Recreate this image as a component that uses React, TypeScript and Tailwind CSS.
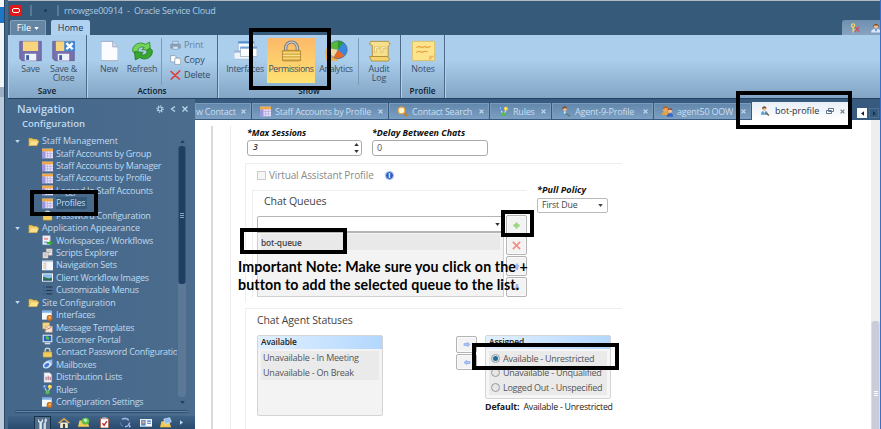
import React from "react";

type IconProps = { name: string; className?: string };

const shapes: Record<string, React.ReactNode> = {
  folder: (
    <>
      <path d="M1 14V3h5l2 2h6v3" fill="#d8a92c" />
      <path d="M1 14L4 7h12l-3 7z" fill="#fce08a" stroke="#c79a2c" strokeWidth=".6" />
      <path d="M2 5h11v2H4l-2 5z" fill="#f6d774" />
    </>
  ),
  report: (
    <>
      <path d="M0 1h16v14H0z" fill="#e8e4fb" />
      <path d="M0 1h16v4H0z" fill="#f0a848" />
      <path d="M0 5h5v10H0z" fill="#7f78d0" opacity=".75" />
      <path d="M8 5v10M12 5v10M0 8h16M0 11.500h16" stroke="#a8a0e0" strokeWidth=".9" />
    </>
  ),
  lock: (
    <>
      <path d="M4.500 8V5a3.500 3.500 0 017 0v3" fill="none" stroke="#d8d8c8" strokeWidth="1.800" />
      <rect x="1.500" y="7" width="13" height="8" rx="1" fill="#ecc24c" stroke="#b88a20" strokeWidth=".6" />
      <path d="M2 10h12M2 12.500h12" stroke="#fbe49a" strokeWidth=".8" />
    </>
  ),
  workspace: (
    <>
      <path d="M1 1h11v13H1z" fill="#f3f5fb" stroke="#b8c0d8" strokeWidth=".6" />
      <path d="M3 4h6v3H3z" fill="#e89aa0" />
      <path d="M3 9h5v3H3z" fill="#9ab0e0" />
      <path d="M7 10h4V7.500l5 4-5 4V13H7z" fill="#2eb030" />
    </>
  ),
  scripts: (
    <>
      <path d="M6 1h9v10H6z" fill="#eceae8" stroke="#777" strokeWidth=".7" />
      <path d="M1 6h8v9H1z" fill="#e9e5e3" stroke="#777" strokeWidth=".7" />
      <path d="M8 4h5M8 6.500h5M3 9h4M3 11.500h4" stroke="#999" strokeWidth=".9" />
    </>
  ),
  navset: (
    <>
      <path d="M0 1h16v14H0z" fill="#f4f7fc" />
      <path d="M0 1h16v2H0z" fill="#c5d0e6" />
      <path d="M5.500 3v12" stroke="#a9b7d6" />
      <path d="M1.500 5.500h3M1.500 8.500h3M1.500 11.500h3" stroke="#e8a860" strokeWidth="1.200" />
    </>
  ),
  image: (
    <>
      <path d="M0 2h16v12H0z" fill="#f0f4fa" />
      <path d="M1.500 3.500h13v5h-13z" fill="#86b8ee" />
      <path d="M1.500 7l4 1 4 1 5-1v4.500h-13z" fill="#2f7a45" />
      <path d="M1.500 11h13v1.500h-13z" fill="#264f8c" />
    </>
  ),
  menu: (
    <>
      <path d="M1 3h3M1 8h3M1 13h3" stroke="#2b57a0" strokeWidth="1.600" />
      <path d="M6 3h9M6 8h9M6 13h9" stroke="#1d2c40" strokeWidth="1.300" />
    </>
  ),
  config: (
    <>
      <path d="M0 1h14v13H0z" fill="#f5f8fd" />
      <path d="M0 1h14v3H0z" fill="#7eb2ea" />
      <circle cx="11" cy="11.500" r="3.500" fill="#e58a2e" stroke="#c2651a" strokeWidth="1.500" />
      <circle cx="11.500" cy="10.500" r="1.400" fill="#ffc070" />
    </>
  ),
  template: (
    <>
      <path d="M1 1h10v9H1z" fill="#f4d88c" stroke="#c69a44" strokeWidth=".7" />
      <path d="M5 6h10v9H5z" fill="#f8e9dc" stroke="#c9906a" strokeWidth=".7" />
      <path d="M3 13L13 8M5 6l5 4 5-4" stroke="#c08058" fill="none" />
    </>
  ),
  portal: (
    <>
      <path d="M1 1h14v11H1z" fill="#e9edf4" />
      <path d="M2.500 2.500h11v8h-11z" fill="#2a5fb4" />
      <path d="M5 4l3-1 3 3-2 3-3-2z" fill="#52c045" />
      <path d="M4 12.500h8V15H4z" fill="#d7dde8" />
    </>
  ),
  mailbox: (
    <>
      <ellipse cx="8" cy="8" rx="7.500" ry="5" fill="#cfe3ff" transform="rotate(-35 8 8)" />
      <ellipse cx="7" cy="9" rx="4" ry="2.500" fill="#3f78d4" transform="rotate(-35 7 9)" />
      <path d="M9 2l6-1.500V8z" fill="#8cb8f4" />
    </>
  ),
  list: (
    <>
      <path d="M3 1h8l3 3v11H3z" fill="#f2f2f6" stroke="#c0c0cc" strokeWidth=".6" />
      <path d="M6 7v5M9 5.500V12M12 7v5" stroke="#b04858" strokeWidth="1.200" />
      <path d="M5 9h7" stroke="#8a94c4" strokeWidth=".8" />
    </>
  ),
  rules: (
    <>
      <path d="M4 5l4 8 4-8" stroke="#d9e4f0" strokeWidth="1.500" fill="none" />
      <circle cx="4" cy="4" r="3" fill="#4f86e4" />
      <circle cx="11.500" cy="4" r="3" fill="#f2d44a" />
      <circle cx="8" cy="12" r="3" fill="#4fbf56" />
      <circle cx="3.500" cy="3.200" r="1" fill="#d5e5ff" />
      <circle cx="11" cy="3.200" r="1" fill="#fffbe0" />
    </>
  ),
  search: (
    <>
      <path d="M9.500 9.500l5 5" stroke="#d07a20" strokeWidth="3" />
      <circle cx="6.500" cy="6.500" r="4.800" fill="#fff4d8" stroke="#f0a53c" strokeWidth="1.600" />
    </>
  ),
  person: (
    <>
      <path d="M1.500 14c0-5 2-6 5.500-6s5.500 1 5.500 6z" fill="#5f9fd4" />
      <path d="M5.500 8h3L7 12z" fill="#f4f8fc" />
      <circle cx="7" cy="4.500" r="3" fill="#f0b888" />
      <path d="M3.500 5c-1-6 7-6 7-1L7 3z" fill="#7a5230" />
      <path d="M9 11l5.500 4" stroke="#7a6a50" strokeWidth="2" />
    </>
  ),
  people: (
    <>
      <circle cx="5" cy="5" r="3.800" fill="#f0a860" />
      <path d="M1 5c0-6 8-6 8-1L5 3z" fill="#b8621c" />
      <path d="M0 13c0-4 2-5 5-5s5 1 5 5z" fill="#e9a13c" />
      <circle cx="11.500" cy="7" r="3.300" fill="#f2c08c" />
      <path d="M8 7c0-5 7-5 7-1l-4-1z" fill="#8a3a14" />
      <path d="M7 15.500c0-4 2-5 4.500-5S16 11 16 15.500z" fill="#3d63c4" />
    </>
  ),
  agent: (
    <>
      <path d="M0 15c0-4 3-6 8-6s8 2 8 6z" fill="#dbe8fb" />
      <path d="M6 10l2 4 2-4z" fill="#4d7ccc" />
      <circle cx="8" cy="5.500" r="3.400" fill="#f1bd8c" />
      <path d="M3.500 7C2 0 14 0 12.500 7L11 4H5z" fill="#7c4420" />
    </>
  ),
  keyx: (
    <>
      <circle cx="5" cy="4" r="2.600" fill="none" stroke="#f2d060" strokeWidth="2" />
      <path d="M5 6v9M5 11h3" stroke="#f2d060" strokeWidth="2.200" />
      <path d="M8 6l7 8M15 6l-7 8" stroke="#e03c48" strokeWidth="1.700" />
    </>
  ),
  floppy: (
    <>
      <path d="M.5 1h15v14H2L.5 13.500z" fill="#7670ac" stroke="#5c5690" strokeWidth=".5" />
      <path d="M2.700 1h10.600v7H2.700z" fill="#f8d47c" />
      <path d="M4 10h8v5H4z" fill="#eef3fb" />
      <path d="M5 11h2v3.500H5z" fill="#3d5fa8" />
    </>
  ),
  floppyx: (
    <>
      <path d="M.5 1h15v14H2L.5 13.500z" fill="#7670ac" stroke="#5c5690" strokeWidth=".5" />
      <path d="M2.700 1h10.600v7H2.700z" fill="#f8d47c" />
      <path d="M4 10h8v5H4z" fill="#eef3fb" />
      <path d="M5 11h2v3.500H5z" fill="#3d5fa8" />
      <path d="M8.500 1H16v7H8.500z" fill="#3f86d4" />
      <path d="M10 2.300l4.400 4.400M14.400 2.300L10 6.700" stroke="#fff" strokeWidth="1.700" />
    </>
  ),
  page: (
    <>
      <path d="M0 1h11l5 4v10H0z" fill="#fbfcff" stroke="#8e9bb4" strokeWidth=".6" />
      <path d="M11 1v4h5" fill="#cfd9ea" stroke="#8e9bb4" strokeWidth=".6" />
    </>
  ),
  refresh: (
    <>
      <path d="M1.200 8.500C.5 3.500 6 .5 10 3.200L13 1.500l.5 6-6-.5L9.300 5.500C6.500 4.300 4.600 6 5 8.500L3 10z" fill="#74d45a" stroke="#2c8a24" strokeWidth=".6" />
      <path d="M14.800 7.500c.7 5-4.800 8-8.800 5.300L3 14.500l-.5-6 6 .5-1.800 1.500c2.800 1.200 4.700-.5 4.300-3L13 6z" fill="#39a62e" stroke="#1f7a1c" strokeWidth=".6" />
    </>
  ),
  printer: (
    <>
      <path d="M4 2h8v5H4z" fill="#c5d6e8" stroke="#6f88a2" strokeWidth=".8" />
      <path d="M1 7h14v6H1z" fill="#8ea6be" stroke="#66809c" strokeWidth=".8" />
      <path d="M4 10h8v5H4z" fill="#d4e2ef" stroke="#6f88a2" strokeWidth=".8" />
    </>
  ),
  copy: (
    <>
      <path d="M1 1h6l2 2v8H1z" fill="#fff" stroke="#68788c" strokeWidth=".8" />
      <path d="M7 5h6l2.500 2.500V15H7z" fill="#fff" stroke="#68788c" strokeWidth=".8" />
    </>
  ),
  redx: <path d="M1.500 2.500l12 12M14 1.500L2 14.500" stroke="#e63c32" strokeWidth="2.500" strokeLinecap="round" />,
  windows: (
    <>
      <path d="M3 1h11v7H3z" fill="#f4f8fd" stroke="#8fa6c4" strokeWidth=".4" />
      <path d="M3 1h11v1.500H3z" fill="#4a8bd4" />
      <path d="M0 8h11v6H0z" fill="#eef4fb" stroke="#8fa6c4" strokeWidth=".4" />
      <path d="M0 8h11v1.200H0z" fill="#9ab8da" />
      <path d="M4.500 5H16v7H4.500z" fill="#fbfdff" stroke="#8094b0" strokeWidth=".4" />
      <path d="M4.500 5H16v1.300H4.500z" fill="#6a9fdc" />
    </>
  ),
  padlock: (
    <>
      <path d="M4 8V5.500a4 4 0 018 0V8" fill="none" stroke="#6e7178" strokeWidth="2.200" />
      <path d="M4 8V5.500a4 4 0 018 0V8" fill="none" stroke="#c4c8ce" strokeWidth="1.100" />
      <rect x="1.700" y="7.500" width="12.600" height="7.700" rx=".6" fill="#deb348" stroke="#9a762a" strokeWidth=".5" />
      <path d="M2 9.300h12M2 11.300h12M2 13.300h12" stroke="#f9e094" strokeWidth=".8" />
    </>
  ),
  pie: (
    <>
      <path d="M0 8l3-5h6v12H1z" fill="#f3b13c" />
      <circle cx="9" cy="7" r="6.500" fill="#3a86e0" />
      <path d="M9 7V.5A6.500 6.500 0 002.600 6z" fill="#58b83c" />
      <path d="M9 7L2.600 6A6.500 6.500 0 006 12.800z" fill="#f0d9a4" />
      <path d="M9 7l-3 5.800a6.500 6.500 0 007.500-1.300z" fill="#e86a28" />
      <path d="M9 7V.5a6.500 6.500 0 014 1.400z" fill="#2c9a38" />
      <circle cx="9" cy="7" r="6.500" fill="none" stroke="#50708a" strokeWidth=".5" />
    </>
  ),
  scroll: (
    <>
      <path d="M2 1h12l1.500 2-1.500 1.500V12H3V4L1 3z" fill="#f7e08c" stroke="#b08a30" strokeWidth=".6" />
      <path d="M1 12h12l2 1.500-1 1.800H2.500z" fill="#f3d470" stroke="#b08a30" strokeWidth=".6" />
      <path d="M4.500 5h3.500v1.300H5.800V9H4.500zM9 5h3.500v1.300h-2.200V9H9z" fill="#fff6c8" stroke="#b89238" strokeWidth=".3" />
    </>
  ),
  note: (
    <>
      <path d="M.3 1h15.400v14H.3z" fill="#fbe48c" stroke="#dcb850" strokeWidth=".5" />
      <path d="M3 5.500l2-.8 2 .8 2-.8 2 .8 2-1M3 9l2-.8 2 .8 2-.8 2 .3" stroke="#e8a040" strokeWidth=".8" fill="none" />
      <path d="M12 15v-3.500h3.500z" fill="#f0b860" />
    </>
  ),
  tools: (
    <>
      <path d="M3 1v3l2 1.500L7 4V1c3 1.500 2 5 0 6v9H3.500V7C1 6 .5 2.500 3 1z" fill="#e2e9f1" />
      <path d="M13 0l2 3-2 4v9h-3.500V8L11 6V2z" fill="#c9d6e4" />
    </>
  ),
  home: (
    <>
      <path d="M3 8h10v8H3z" fill="#f8eed0" />
      <path d="M0 8.500L8 1l8 7.500-1.500 1L8 4 1.500 9.500z" fill="#e8a848" />
      <path d="M6.500 10h3v6h-3z" fill="#4a4440" />
    </>
  ),
  globe: (
    <>
      <path d="M0 14l2-9h10l3 9z" fill="#f2cc58" />
      <circle cx="10" cy="6" r="5" fill="#5dbb48" />
      <path d="M7 4l3-2 3 3-3 3z" fill="#c6efc0" />
    </>
  ),
  clip: (
    <>
      <path d="M2 2h12v14H2z" fill="#fff" stroke="#a85032" strokeWidth="1.200" />
      <path d="M5 .5h6v3H5z" fill="#b4bac6" />
      <path d="M5 9l2.500 3L11.500 6" stroke="#c02c34" strokeWidth="2" fill="none" />
    </>
  ),
  ring: (
    <>
      <path d="M4 3.500a6 6 0 019 1.500M14 8a6 6 0 01-6 6" fill="none" stroke="#a5b5ec" strokeWidth="2.200" />
      <path d="M2 8a6 6 0 003.500 5.500" fill="none" stroke="#5570b0" strokeWidth="2" />
      <path d="M13 12l3 1-2 3z" fill="#c6d2f4" />
    </>
  ),
  card: (
    <>
      <path d="M0 3h16v11H0z" fill="#f5f8fd" />
      <path d="M1.500 4.500h6v8h-6z" fill="#4d8ad0" />
      <circle cx="4.500" cy="7.500" r="1.800" fill="#f2a47a" />
      <path d="M9.500 6h5M9.500 9h5" stroke="#3f77c4" strokeWidth="1.500" />
    </>
  ),
  docs: (
    <>
      <path d="M0 15l2-9h10l3 9z" fill="#f0c850" />
      <path d="M5 3l8-2 2 6-8 4z" fill="#8fbdf0" stroke="#e8f2ff" strokeWidth=".8" />
    </>
  ),
};

const Icon = ({ name, className = "size-[11px]" }: IconProps) => (
  <svg viewBox="0 0 16 16" preserveAspectRatio="none" className={`shrink-0 ${className}`}>
    {shapes[name]}
  </svg>
);

const tree: [string, string][] = [
  ["folder", "Staff Management"],
  ["report", "Staff Accounts by Group"],
  ["report", "Staff Accounts by Manager"],
  ["report", "Staff Accounts by Profile"],
  ["report", "Logged In Staff Accounts"],
  ["report", "Profiles"],
  ["lock", "Password Configuration"],
  ["folder", "Application Appearance"],
  ["workspace", "Workspaces / Workflows"],
  ["scripts", "Scripts Explorer"],
  ["navset", "Navigation Sets"],
  ["image", "Client Workflow Images"],
  ["menu", "Customizable Menus"],
  ["folder", "Site Configuration"],
  ["config", "Interfaces"],
  ["template", "Message Templates"],
  ["portal", "Customer Portal"],
  ["lock", "Contact Password Configuratio"],
  ["mailbox", "Mailboxes"],
  ["list", "Distribution Lists"],
  ["rules", "Rules"],
  ["config", "Configuration Settings"],
];

const Cross = ({ className = "text-[#c4d9ec]" }: { className?: string }) => (
  <svg viewBox="0 0 6 6" className={`size-[5px] shrink-0 ${className}`}>
    <path d="M.7.700l4.600 4.600M5.300.700L.7 5.300" stroke="currentColor" strokeWidth="1.500" />
  </svg>
);

const BigButton = ({ icon, label, className }: { icon: string; label: React.ReactNode; className: string }) => (
  <div className={`flex h-[45px] shrink-0 flex-col items-center pt-[2px] ${className}`}>
    <Icon name={icon} className={icon === "page" ? "h-[22px] w-[17px]" : "h-[22px] w-[23px]"} />
    <div className="mt-[2px] text-center text-[8.9px] leading-[9px] tracking-[-0.15px] whitespace-nowrap text-[#3c4f63]">{label}</div>
  </div>
);

const Group = ({ title, className, children }: { title: string; className: string; children: React.ReactNode }) => (
  <div className={`flex shrink-0 flex-col border-r border-[#4d6987] shadow-[inset_1px_0_0_#b4d0ea] ${className}`}>
    <div className="flex h-[48px] pt-[3px]">{children}</div>
    <div className="mt-[2px] text-center text-[8.2px] leading-[11px] font-semibold text-[#0b1a2c]">{title}</div>
  </div>
);

const SmallAction = ({ icon, label, className }: { icon: string; label: string; className: string }) => (
  <div className={`flex h-[15px] items-center gap-[3px] text-[9px] tracking-[-0.15px] ${className}`}>
    <Icon name={icon} className="h-[10px] w-[11px]" />
    {label}
  </div>
);

const Tab = ({ icon, label, className }: { icon?: string; label: string; className: string }) => (
  <div className={`mr-[1px] flex h-[16px] shrink-0 items-center border-x border-t border-[#7c9cbc] bg-gradient-to-b from-[#6388ab] to-[#7c9fc2] pr-[4px] text-[9px] tracking-[-0.22px] whitespace-nowrap text-[#c9def1] ${className}`}>
    {icon && <Icon name={icon} className="mr-[4px] h-[11px] w-[11px]" />}
    <span className="flex-1">{label}</span>
    <Cross />
  </div>
);

const ArrowDown = ({ className = "" }: { className?: string }) => (
  <svg viewBox="0 0 6 4" className={`h-[3px] w-[5px] shrink-0 ${className}`}>
    <path d="M0 0h6L3 4z" fill="currentColor" />
  </svg>
);

const SquareButton = ({ className = "h-[20px] w-[21px]", children }: { className?: string; children: React.ReactNode }) => (
  <div className={`flex shrink-0 items-center justify-center rounded-[2px] border border-[#b4b4b4] bg-[#f3f3f3] shadow-[inset_0_0_0_1px_#fafafa] ${className}`}>
    {children}
  </div>
);

const BlueArrow = ({ className = "" }: { className?: string }) => (
  <svg viewBox="0 0 8 6" className={`h-[5px] w-[8px] ${className}`}>
    <path d="M.3 1.800h4V.3L7.700 3 4.300 5.700V4.200h-4z" fill="#a5c1f8" stroke="#6a92e4" strokeWidth=".5" />
  </svg>
);

const Radio = ({ on, label }: { on?: boolean; label: string }) => (
  <div className="flex h-[14.5px] items-center gap-[3px] pl-[2px]">
    <span className="flex size-[9px] shrink-0 items-center justify-center rounded-full border border-[#9a9a9a] bg-[#e6e6e6]">
      {on && <span className="size-[5px] rounded-full bg-[#1f6f9e]" />}
    </span>
    {label}
  </div>
);

const Mark = ({ className }: { className: string }) => <div className={`absolute border-black ${className}`} />;

export default function App() {
  return (
    <div className="relative flex h-[429px] w-[881px] overflow-hidden bg-[#3f5f7f] font-['Open_Sans','Noto_Sans',sans-serif]">
      <div className="flex w-[4px] shrink-0 flex-col bg-[#bccbdc]">
        <div className="h-[7px] bg-[#f4f4f4]" />
        <div className="h-[16px] bg-[#1d75c8]" />
        <div className="h-[64px] bg-[#f2f5f8]" />
        <div className="h-[10px] bg-[#9db0c4]" />
      </div>
      <div className="w-[4px] shrink-0 border-l border-[#2b4864] bg-[#446688]" />

      <div className="flex w-[872px] shrink-0 flex-col">
        <div className="flex h-[35px] shrink-0 flex-col border-t border-[#b2b8bd] bg-[#365a79]">
          <div className="flex h-[19px] items-center">
            <div className="ml-[2px] flex h-[11px] w-[12px] items-center justify-center rounded-[2px] bg-[#e01818]">
              <div className="h-[5px] w-[8px] rounded-[2px] border border-white" />
            </div>
            <div className="ml-[8px] h-[11px] w-[2px] bg-[#587a98]" />
            <div className="ml-[12px] size-[3px] rounded-full bg-[#1d3a54]" />
            <div className="ml-[10px] h-[11px] w-[2px] bg-[#587a98]" />
            <div className="ml-[5px] text-[9px] tracking-[-0.23px] whitespace-pre text-[#a9cbe8]">rnowgse00914  -  Oracle Service Cloud</div>
          </div>
          <div className="flex h-[15px] text-[9.2px]">
            <div className="ml-[2px] flex w-[36px] items-center justify-center gap-[3px] rounded-t-[2px] border-x border-t border-[#86a2bb] bg-[#6485a3] text-white">
              File <ArrowDown />
            </div>
            <div className="ml-[5px] flex w-[39px] items-center justify-center rounded-t-[2px] bg-[#b0d1f0] text-[9px] text-[#12365c]">Home</div>
            <div className="ml-[752px] flex h-[15px] w-[38px] items-center gap-[11px] rounded-tl-[3px] bg-gradient-to-b from-[#6f8faf] to-[#87a4c1] pl-[8px]">
              <Icon name="keyx" className="size-[10px]" />
              <Icon name="agent" className="size-[10px]" />
            </div>
          </div>
        </div>

        <div className="flex h-[63px] shrink-0 bg-gradient-to-b from-[#abceed] from-40% to-[#83a5c5]">
          <Group title="Save" className="w-[79px]">
            <BigButton icon="floppy" label="Save" className="ml-[6px] w-[33px]" />
            <BigButton icon="floppyx" label={<>Save &<br />Close</>} className="w-[33px]" />
          </Group>
          <Group title="Actions" className="w-[131px]">
            <BigButton icon="page" label="New" className="ml-[4px] w-[36px]" />
            <BigButton icon="refresh" label="Refresh" className="w-[30px]" />
            <div className="ml-[4px] h-[47px] w-px bg-[#7f9ab5]" />
            <div className="ml-[8px] -mt-px">
              <SmallAction icon="printer" label="Print" className="text-[#6683a0]" />
              <SmallAction icon="copy" label="Copy" className="text-[#334a62]" />
              <SmallAction icon="redx" label="Delete" className="text-[#334a62]" />
            </div>
          </Group>
          <Group title="Show" className="w-[183px]">
            <BigButton icon="windows" label={<span className="tracking-[-0.35px]">Interfaces</span>} className="ml-[6px] w-[42px]" />
            <BigButton icon="padlock" label={<span className="tracking-[-0.45px]">Permissions</span>} className="ml-[1px] w-[48px] bg-gradient-to-b from-[#fcb968] to-[#fde272]" />
            <BigButton icon="pie" label={<span className="tracking-[-0.35px]">Analytics</span>} className="ml-[1px] w-[40px]" />
            <div className="ml-[2px] h-[47px] w-px bg-[#7f9ab5]" />
            <BigButton icon="scroll" label={<>Audit<br />Log</>} className="ml-[1px] w-[38px]" />
          </Group>
          <Group title="Profile" className="w-[44px]">
            <BigButton icon="note" label="Notes" className="w-[44px]" />
          </Group>
          <div className="w-px bg-[#b4d0ea]" />
        </div>
        <div className="h-px shrink-0 bg-[#25415f]" />

        <div className="flex h-[330px]">
          <div className="flex w-[187px] shrink-0 flex-col bg-gradient-to-r from-[#45678a] to-[#4b6c8d] text-[#bfdaf1]">
            <div className="flex h-[20px] items-center pr-[7px] pl-[9px]">
              <div className="flex-1 text-[11px] font-semibold">Navigation</div>
              <svg viewBox="0 0 32 8" className="h-[8px] w-[32px]">
                <circle cx="4" cy="4" r="2" fill="none" stroke="currentColor" strokeWidth="1.200" />
                <circle cx="4" cy="4" r="3.200" fill="none" stroke="currentColor" strokeWidth="1.200" strokeDasharray="1.100 1.400" />
                <path d="M19 1.500L15.500 4 19 6.500M26.500 1.500l5 5M31.500 1.500l-5 5" fill="none" stroke="currentColor" strokeWidth="1.300" />
              </svg>
            </div>
            <div className="h-[15px] pl-[14px] text-[9.5px] leading-[9px] font-semibold">Configuration</div>
            <div className="flex h-[275px]">
              <div className="w-[169px] overflow-hidden pt-[1px] text-[9px] tracking-[-0.26px]">
                {tree.map(([icon, label]) => (
                  <div key={label} className={`flex h-[12.43px] items-center whitespace-nowrap ${icon === "folder" ? "pl-[7px] tracking-[-0.08px]" : "pl-[34px]"}`}>
                    {icon === "folder" && <ArrowDown className="mr-[8px]" />}
                    <Icon name={icon} className="h-[11px] w-[11px]" />
                    <span className={`ml-[3px] leading-[12px] ${label === "Profiles" ? "bg-[#345878] pr-[2px]" : ""}`}>{label}</span>
                  </div>
                ))}
              </div>
              <div className="ml-[1px] flex w-[8px] flex-col items-center pt-[6px]">
                <ArrowDown className="rotate-180 text-[#243d58]" />
                <div className="mt-[3px] flex h-[251px] w-[8px] flex-col rounded-[3px] bg-[#5b7997]">
                  <div className="flex h-[138px] flex-col items-center justify-center gap-[1px] rounded-[3px] border-x border-[#35597c] bg-[#203f60]">
                    <div className="h-px w-[4px] bg-[#88a6c2]" />
                    <div className="h-px w-[4px] bg-[#88a6c2]" />
                    <div className="h-px w-[4px] bg-[#88a6c2]" />
                  </div>
                </div>
                <ArrowDown className="mt-[4px] text-[#243d58]" />
              </div>
            </div>
            <div className="mt-[1px] ml-[7px] h-[3px] w-[173px] rounded-full border border-[#2d4f71] bg-[#6485a4]" />
            <div className="mt-[3px] flex h-[13px] items-center bg-gradient-to-b from-[#3f6287] to-[#294b6e] pl-[26px]">
              <div className="flex h-[13px] w-[17px] items-center justify-center border border-b-0 border-[#17304b] bg-[#506d8a]">
                <Icon name="tools" className="h-[11px] w-[11px]" />
              </div>
              <Icon name="home" className="ml-[7px] h-[11px] w-[12px]" />
              <Icon name="globe" className="ml-[8px] h-[11px] w-[12px]" />
              <Icon name="clip" className="ml-[9px] h-[11px] w-[11px]" />
              <Icon name="ring" className="ml-[9px] h-[11px] w-[12px]" />
              <Icon name="card" className="ml-[9px] h-[11px] w-[12px]" />
              <Icon name="docs" className="ml-[8px] h-[11px] w-[12px]" />
              <ArrowDown className="ml-[7px] -rotate-90" />
            </div>
          </div>

          <div className="flex w-[685px] shrink-0 flex-col">
            <div className="flex h-[21px] shrink-0 items-end bg-[#365b7e] pb-px">
              <Tab label="w Contact" className="w-[56px]" />
              <Tab icon="report" label="Staff Accounts by Profile" className="w-[136px] pl-[7px]" />
              <Tab icon="search" label="Contact Search" className="w-[100px] pl-[7px]" />
              <Tab icon="rules" label="Rules" className="w-[61px] pl-[7px]" />
              <Tab icon="person" label="Agent-9-Profile" className="w-[101px] pl-[7px]" />
              <Tab icon="people" label="agent50 OOW" className="w-[97px] pl-[7px]" />
              <div className="-mb-px flex h-[18px] w-[99px] shrink-0 items-center bg-gradient-to-b from-[#e8eff7] to-white pr-[6px] pl-[8px] text-[9px] text-[#26323e]">
                <Icon name="person" className="mr-[5px] h-[10px] w-[10px]" />
                <span className="flex-1">bot-profile</span>
                <svg viewBox="0 0 8 6" className="mr-[6px] h-[6px] w-[8px]">
                  <path d="M2.500.5h5v3h-5zM.5 2.500h5v3h-5z" fill="#fff" stroke="#60748c" />
                </svg>
                <Cross className="text-[#737f8c]" />
              </div>
              <div className="mb-[1px] ml-[6px] flex size-[10px] items-center justify-center bg-white text-[#102030]">
                <ArrowDown className="rotate-90" />
              </div>
              <div className="mb-[1px] ml-[2px] flex size-[10px] items-center justify-center border border-[#4e7090] text-[#17304b]">
                <ArrowDown className="-rotate-90" />
              </div>
            </div>

            <div className="flex h-[309px] bg-white pl-[16px] text-[9px] tracking-[-0.12px] text-[#555]">
              <div className="mt-[6px] w-[2px] shrink-0 bg-[#dadada]" />
              <div className="mt-[6px] ml-[17px] w-[641px] shrink-0 border-l border-[#ececec] pl-[14px]">
                <div className="flex gap-[11px]">
                  <div className="ml-[2px] w-[115px]">
                    <div className="h-[14px] text-[8.8px] leading-[14px] font-bold tracking-[-0.05px] text-[#111] italic">*Max Sessions</div>
                    <div className="flex h-[16px] items-center rounded-[3px] border border-[#aaa] pr-[2px] pl-[5px] text-[8.7px] font-semibold text-[#333] italic">
                      <span className="flex-1">3</span>
                      <div className="flex flex-col gap-[4px] text-[#333]">
                        <ArrowDown className="rotate-180" />
                        <ArrowDown />
                      </div>
                    </div>
                  </div>
                  <div className="-ml-px w-[116px]">
                    <div className="h-[14px] text-[8.9px] leading-[14px] font-bold tracking-[0px] text-[#111] italic">*Delay Between Chats</div>
                    <div className="flex h-[16px] items-center rounded-[3px] border border-[#aaa] pl-[4px]">0</div>
                  </div>
                </div>

                <div className="mt-[7px] h-[139px] w-[377px] border-t border-l border-[#eee] pl-[6px]">
                  <div className="flex h-[22px] items-center pl-[5px] text-[10px] text-[#8a8a8a]">
                    <div className="mr-[3px] size-[9px] border border-[#ccc] bg-[#f6f6f6]" />
                    Virtual Assistant Profile
                    <div className="ml-[11px] flex size-[9px] items-center justify-center rounded-full border border-[#b4c8ee] bg-[#2d5fc4] text-[7px] leading-none font-bold text-white">i</div>
                  </div>
                  <div className="flex">
                    <div className="mt-[4px] w-[275px] border-t border-l border-[#eee] pl-[4px]">
                      <div className="h-[25px] pl-[7px] text-[10.6px] leading-[21px] text-[#444]">Chat Queues</div>
                      <div className="flex gap-[2px]">
                        <div className="w-[248px]">
                          <div className="flex h-[17px] items-center justify-end rounded-t-[2px] border border-b-2 border-[#b5b5b5] pr-[3px] text-[#333]">
                            <ArrowDown />
                          </div>
                          <div className="h-[64px] border border-t-0 border-[#d0d0d0] bg-[#f3f3f3] px-[3px] pt-[1px]">
                            <div className="h-[16px] bg-[#e9e9e9] text-[8.4px] leading-[17px] font-semibold text-[#444]">bot-queue</div>
                          </div>
                        </div>
                        <div className="-mt-px flex flex-col gap-[1px]">
                          <SquareButton className="h-[20px] w-[21px]">
                            <svg viewBox="0 0 8 8" className="size-[7px]"><path d="M4 .5v7M.5 4h7" stroke="#98d67c" strokeWidth="2.600" /></svg>
                          </SquareButton>
                          <SquareButton className="h-[19px] w-[21px]">
                            <svg viewBox="0 0 10 10" className="size-[9px]"><path d="M1 1l8 8M9 1L1 9" stroke="#f28e86" strokeWidth="1.900" /></svg>
                          </SquareButton>
                          <SquareButton><BlueArrow className="-rotate-90" /></SquareButton>
                          <SquareButton><BlueArrow className="rotate-90" /></SquareButton>
                        </div>
                      </div>
                    </div>
                    <div className="ml-[10px] w-[71px]">
                      <div className="h-[12px] text-[9px] leading-[8px] font-bold tracking-[0.05px] whitespace-nowrap text-[#111] italic">*Pull Policy</div>
                      <div className="flex h-[15px] items-center justify-between rounded-[2px] border border-[#bbb] pr-[4px] pl-[4px] text-[8.8px] text-[#444]">
                        First Due <ArrowDown />
                      </div>
                    </div>
                  </div>
                </div>

                <div className="mt-[6px] h-[130px] w-[377px] border-t border-l border-[#eee] pl-[11px]">
                  <div className="h-[26px] text-[10.5px] leading-[22px] text-[#444]">Chat Agent Statuses</div>
                  <div className="flex">
                    <div className="h-[81px] w-[126px] rounded-[2px] border border-[#d4d4d4] bg-[#f3f3f3]">
                      <div className="h-[13px] bg-gradient-to-r from-[#e2f0ff] to-[#b2d7fe] pl-[3px] text-[8.4px] leading-[12px] font-semibold text-[#222]">Available</div>
                      <div className="mx-[3px] mt-[2px] bg-[#eaeaea] pl-[2px] leading-[14.5px] tracking-[-0.22px]">
                        <div>Unavailable - In Meeting</div>
                        <div>Unavailable - On Break</div>
                      </div>
                    </div>
                    <div className="ml-[73px] flex flex-col gap-[1px] pt-[1px]">
                      <SquareButton className="h-[17px] w-[21px]"><BlueArrow /></SquareButton>
                      <SquareButton className="h-[16px] w-[21px]"><BlueArrow className="rotate-180" /></SquareButton>
                    </div>
                    <div className="ml-[8px] w-[126px]">
                      <div className="h-[64px] rounded-[2px] border border-[#d4d4d4] bg-[#f6f6f6]">
                        <div className="h-[13px] bg-gradient-to-r from-[#e2f0ff] to-[#b2d7fe] pl-[3px] text-[8.4px] leading-[12px] font-semibold text-[#222]">Assigned</div>
                        <div className="mx-[3px] mt-[2px] bg-[#eaeaea] tracking-[-0.26px] whitespace-nowrap">
                          <Radio on label="Available - Unrestricted" />
                          <Radio label="Unavailable - Unqualified" />
                          <Radio label="Logged Out - Unspecified" />
                        </div>
                      </div>
                      <div className="text-[8.8px] leading-[16px] tracking-[-0.25px] whitespace-nowrap text-[#222]">
                        <span className="mr-[4px] font-bold tracking-[-0.1px]">Default:</span>Available - Unrestricted
                      </div>
                    </div>
                  </div>
                </div>
              </div>
              <div className="ml-auto flex w-[9px] flex-col bg-[#eee]">
                <div className="mt-[201px] flex flex-1 flex-col items-center gap-[1px] rounded-t-[3px] border-x border-[#dcdee6] bg-[#cacdd9] pt-[70px]">
                  <div className="h-px w-[4px] bg-white" />
                  <div className="h-px w-[4px] bg-white" />
                  <div className="h-px w-[4px] bg-white" />
                </div>
              </div>
            </div>
          </div>
        </div>
      </div>
      <div className="w-px shrink-0 bg-[#3b6fc6]" />

      <div className="absolute top-[258px] left-[238px] font-['Lato',sans-serif] text-[14.2px] leading-[18px] font-bold tracking-[0.12px] whitespace-nowrap text-black">
        <div>Important Note: Make sure you click on the +</div>
        <div>button to add the selected queue to the list.</div>
      </div>
      <Mark className="top-[28px] left-[249px] h-[62px] w-[82px] border-4" />
      <Mark className="top-[91px] left-[736px] h-[38px] w-[116px] border-4" />
      <Mark className="top-[190px] left-[30px] h-[26px] w-[68px] border-4" />
      <Mark className="top-[228px] left-[240px] h-[26px] w-[107px] border-4" />
      <Mark className="top-[210px] left-[501px] h-[27px] w-[33px] border-4" />
      <Mark className="top-[343px] left-[472px] h-[27px] w-[147px] border-4" />
    </div>
  );
}
